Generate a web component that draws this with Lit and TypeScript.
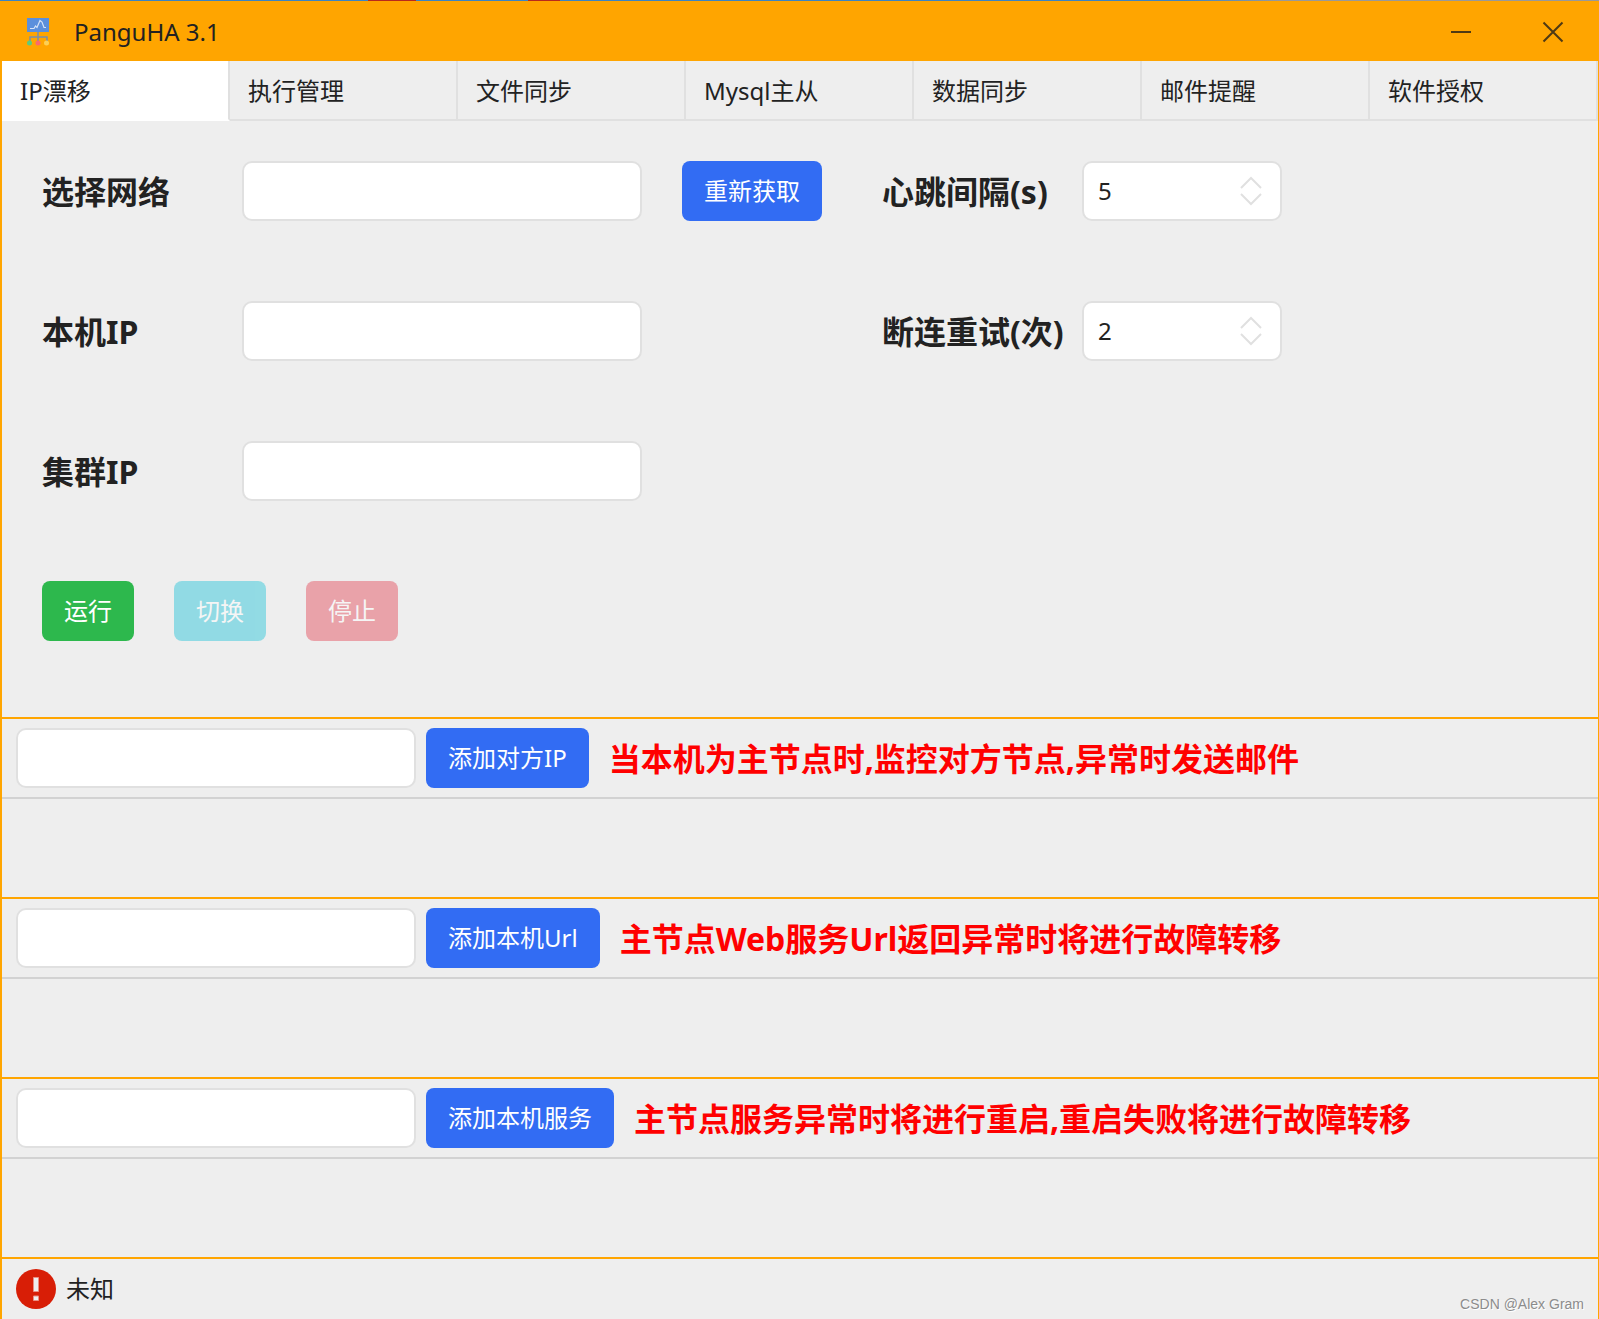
import { LitElement, html, css } from "lit";
import { customElement, property, state } from "lit/decorators.js";

const controls = css`
  *, *::before, *::after { box-sizing: border-box; }
  button, input {
    font: inherit;
    color: inherit;
    margin: 0;
  }
  .field {
    width: 400px;
    height: 60px;
    padding: 0 16px;
    border: 2px solid #e0e0e0;
    border-radius: 10px;
    background: #fff;
    outline: none;
  }
  .button {
    height: 60px;
    padding: 0 22px;
    border: 0;
    border-radius: 8px;
    color: #fff;
    background: #326cf3;
    line-height: 36px;
    white-space: nowrap;
    cursor: pointer;
  }
  .button:disabled { opacity: 0.45; cursor: default; }
`;

@customElement("number-box")
class NumberBox extends LitElement {
  @property() label = "";
  @property({ type: Number }) value = 0;

  static styles = [
    controls,
    css`
      :host { display: contents; }
      .label { font-size: 32px; font-weight: 700; line-height: 40px; padding-top: 2px; white-space: nowrap; }
      .box {
        display: flex;
        align-items: center;
        width: 200px;
        height: 60px;
        padding: 0 17px 0 14px;
        border: 2px solid #e0e0e0;
        border-radius: 10px;
        background: #fff;
      }
      .number {
        flex: 1;
        min-width: 0;
        height: 36px;
        padding: 0;
        border: 0;
        outline: none;
        background: none;
        appearance: textfield;
      }
      .number::-webkit-inner-spin-button { appearance: none; }
      .steps { display: flex; flex-direction: column; gap: 4px; }
      .step { display: block; padding: 0; border: 0; background: none; line-height: 0; cursor: pointer; }
      .chevron { display: block; width: 24px; height: 13px; fill: none; stroke: #e0e0e0; stroke-width: 2; }
    `,
  ];

  render() {
    return html`
      <label class="label" for="number">${this.label}</label>
      <div class="box">
        <input class="number" id="number" type="number" .value=${String(this.value)} />
        <div class="steps">
          <button class="step" type="button" aria-label="+" @click=${() => this.value++}>
            <svg class="chevron" viewBox="0 0 24 13"><path d="M2 12 12 2l10 10" /></svg>
          </button>
          <button class="step" type="button" aria-label="-" @click=${() => this.value--}>
            <svg class="chevron" viewBox="0 0 24 13"><path d="M2 1l10 10L22 1" /></svg>
          </button>
        </div>
      </div>
    `;
  }
}

@customElement("monitor-section")
class MonitorSection extends LitElement {
  @property() action = "";
  @property() hint = "";

  static styles = [
    controls,
    css`
      :host { display: block; border-top: 2px solid #ffa500; }
      .bar {
        display: flex;
        align-items: center;
        gap: 10px;
        height: 80px;
        padding: 0 14px;
        border-bottom: 2px solid #d2d2d2;
      }
      .hint { margin-left: 10px; padding-top: 2px; color: #f00; font-size: 32px; font-weight: 700; line-height: 40px; white-space: nowrap; }
      .list { height: 98px; margin: 0; padding: 0; list-style: none; }
    `,
  ];

  render() {
    return html`
      <div class="bar">
        <input class="field" type="text" aria-label=${this.action} />
        <button class="button" type="button">${this.action}</button>
        <span class="hint">${this.hint}</span>
      </div>
      <ul class="list"></ul>
    `;
  }
}

@customElement("app-root")
class AppRoot extends LitElement {
  @state() private active = 0;

  private tabs = ["IP漂移", "执行管理", "文件同步", "Mysql主从", "数据同步", "邮件提醒", "软件授权"];

  private monitors = [
    { action: "添加对方IP", hint: "当本机为主节点时,监控对方节点,异常时发送邮件" },
    { action: "添加本机Url", hint: "主节点Web服务Url返回异常时将进行故障转移" },
    { action: "添加本机服务", hint: "主节点服务异常时将进行重启,重启失败将进行故障转移" },
  ];

  static styles = [
    controls,
    css`
      :host {
        display: flex;
        flex-direction: column;
        min-height: 100vh;
        box-sizing: border-box;
        color: #222;
        background: #eee;
        font: 24px/36px "Noto Sans", "Noto Sans CJK SC", sans-serif;
      }
      .desktop {
        height: 1px;
        background: linear-gradient(90deg, #3a84c4 0 23%, #b8281c 23% 26%, #3a84c4 26% 33%, #b8281c 33% 35%, #3a84c4 35% 74%, #999 80%);
      }
      .titlebar { display: flex; align-items: center; height: 60px; padding: 0 30px 0 26px; background: #ffa500; }
      .logo { width: 24px; height: 30px; }
      .title { flex: 1; margin: 0 0 0 24px; padding-top: 2px; font-size: 24px; font-weight: 400; }
      .window-buttons { display: flex; gap: 60px; }
      .window-button { display: block; padding: 4px; border: 0; background: none; }
      .window-icon { display: block; width: 24px; height: 24px; fill: none; stroke: #4f3a14; stroke-width: 2; }
      .window { flex: 1; display: flex; flex-direction: column; border: solid #ffa500; border-width: 0 1px 0 2px; }
      .tabs { display: flex; height: 60px; }
      .tab {
        flex: 1 1 0;
        padding: 2px 16px 0 18px;
        border: solid #e0e0e0;
        border-width: 0 2px 2px 0;
        background: none;
        text-align: left;
        white-space: nowrap;
      }
      .tab.active { border-bottom-color: #fff; background: #fff; }
      .panel { flex: 1; display: flex; flex-direction: column; gap: 80px; padding: 40px 40px 76px; }
      .settings {
        display: grid;
        grid-template-columns: 200px 440px 200px 200px 200px;
        row-gap: 80px;
        align-items: center;
      }
      .label { font-size: 32px; font-weight: 700; line-height: 40px; padding-top: 2px; white-space: nowrap; }
      .refresh { justify-self: start; }
      .actions { display: flex; gap: 40px; }
      .run { background: #2db84d; }
      .switch { background: #21c4d8; }
      .stop { background: #e34757; }
      .status { display: flex; align-items: center; height: 62px; padding: 0 14px; gap: 10px; border-top: 2px solid #ffa500; }
      .alert { width: 40px; height: 40px; }
      .watermark { margin-left: auto; align-self: flex-end; padding-bottom: 5px; color: #8c8c8c; font: 14px/20px "Liberation Sans", sans-serif; text-shadow: 1px 1px 0 #fff; }
    `,
  ];

  render() {
    return html`
      <div class="desktop"></div>
      <header class="titlebar">
        <svg class="logo" viewBox="0 0 24 30" aria-hidden="true">
          <path d="M1 2h22v14H1z" fill="#5b8fdc" />
          <path d="M4 12.500h4l1.500-2.500 1.500 1.500 3-7 2 1.500 2 5.500h2" fill="none" stroke="#d5e2f7" stroke-width="1.200" />
          <path d="M12 16v9M4 25v-4h17v4" fill="none" stroke="#7b8fa6" stroke-width="1.500" />
          <circle cx="3.500" cy="27" r="2.500" fill="#5ecb7c" />
          <circle cx="12" cy="27" r="2.500" fill="#fc6a6a" />
          <circle cx="20.500" cy="27" r="2.500" fill="#fdd053" />
        </svg>
        <h1 class="title">PanguHA 3.1</h1>
        <div class="window-buttons">
          <button class="window-button" type="button" aria-label="最小化">
            <svg class="window-icon" viewBox="0 0 24 24"><path d="M2 13h20" /></svg>
          </button>
          <button class="window-button" type="button" aria-label="关闭">
            <svg class="window-icon" viewBox="0 0 24 24"><path d="M2.500 3.500l19 19M21.500 3.500l-19 19" /></svg>
          </button>
        </div>
      </header>
      <main class="window">
        <nav class="tabs" role="tablist">
          ${this.tabs.map(
            (name, i) => html`<button
              class="tab ${i === this.active ? "active" : ""}"
              type="button"
              role="tab"
              aria-selected=${i === this.active}
              @click=${() => (this.active = i)}
            >${name}</button>`
          )}
        </nav>
        <section class="panel">
          <div class="settings">
            <label class="label" for="network">选择网络</label>
            <input class="field" id="network" type="text" />
            <button class="button refresh" type="button">重新获取</button>
            <number-box label="心跳间隔(s)" .value=${5}></number-box>
            <label class="label" for="local">本机IP</label>
            <input class="field" id="local" type="text" />
            <span></span>
            <number-box label="断连重试(次)" .value=${2}></number-box>
            <label class="label" for="cluster">集群IP</label>
            <input class="field" id="cluster" type="text" />
          </div>
          <div class="actions">
            <button class="button run" type="button">运行</button>
            <button class="button switch" type="button" disabled>切换</button>
            <button class="button stop" type="button" disabled>停止</button>
          </div>
        </section>
        ${this.monitors.map((m) => html`<monitor-section .action=${m.action} .hint=${m.hint}></monitor-section>`)}
        <footer class="status">
          <svg class="alert" viewBox="0 0 40 40" aria-hidden="true">
            <circle cx="20" cy="20" r="20" fill="#d81e06" />
            <path d="M17.500 8.500h5v14h-5zM17.500 27h5v4.500h-5z" fill="#eee" stroke="#eb8f83" stroke-width="1" />
          </svg>
          <span>未知</span>
          <span class="watermark">CSDN @Alex Gram</span>
        </footer>
      </main>
    `;
  }
}
